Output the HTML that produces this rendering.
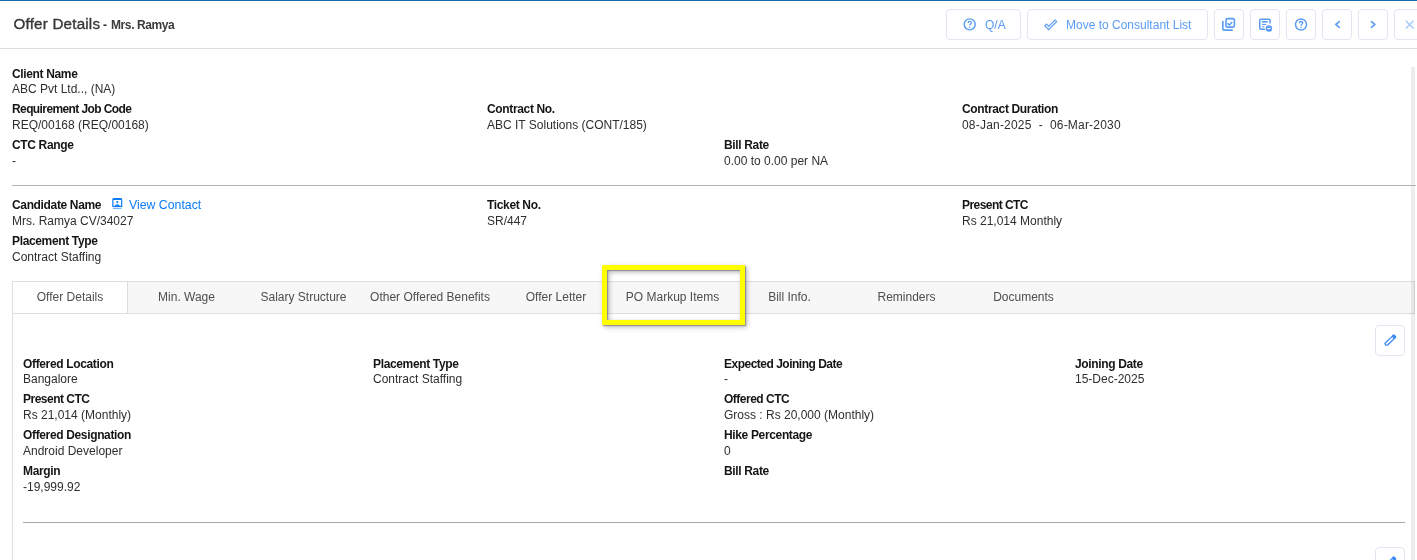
<!DOCTYPE html>
<html><head><meta charset="utf-8">
<style>
html,body{-webkit-font-smoothing:antialiased;margin:0;padding:0;width:1417px;height:560px;overflow:hidden;background:#fff;font-family:"Liberation Sans",sans-serif;}
.a{position:absolute;white-space:pre;line-height:12px;font-size:12px;}
.l{font-weight:700;color:#151515;letter-spacing:-0.35px;}
.v{color:#2e2e2e;}
.btn{position:absolute;box-sizing:border-box;border:1px solid #e1e6f0;border-radius:4px;background:#fff;}
.ib{width:30px;height:31px;top:9px;}
.ib svg{position:absolute;left:0;top:0;}
.tab{position:absolute;top:282px;height:31px;line-height:31px;font-size:12px;color:#4e4e4e;text-align:center;}
</style></head><body><div style="position:absolute;left:0;top:0;width:1417px;height:560px;will-change:transform;background:#fff">
<!-- top blue line -->
<div style="position:absolute;left:0;top:0;width:1417px;height:1px;background:#1b6aad"></div>
<!-- header -->
<div class="a" style="left:13.5px;top:15.8px;font-size:15.2px;line-height:15.5px;letter-spacing:0.2px;color:#363636;-webkit-text-stroke:0.35px #363636">Offer Details</div>
<div class="a" style="left:103px;top:19px;color:#333;font-weight:700">- </div>
<div class="a" style="left:111px;top:19px;color:#3a3a3a;font-weight:700;letter-spacing:-0.4px">Mrs. Ramya</div>
<div style="position:absolute;left:0;top:48px;width:1417px;height:1px;background:#dedede"></div>

<!-- header buttons -->
<div class="btn" style="left:946px;top:9px;width:75px;height:31px">
  <svg style="position:absolute;left:0;top:0" width="73" height="29" viewBox="0 0 73 29"><g transform="translate(8.7 -0.15)"><circle cx="14" cy="14.5" r="5.5" fill="none" stroke="#5a9cf5" stroke-width="1.45"/><path d="M12.4 13.2c0-1.1 .7-1.75 1.65-1.75s1.65.65 1.65 1.5c0 1.15-1.55 1.2-1.55 2.75" fill="none" stroke="#5a9cf5" stroke-width="1.35"/><rect x="13.05" y="16.85" width="1.9" height="1" rx="0.5" fill="#5a9cf5"/></g></svg>
  <div class="a" style="left:38px;top:9px;color:#5a9cf5">Q/A</div>
</div>
<div class="btn" style="left:1027px;top:9px;width:181px;height:31px">
  <svg style="position:absolute;left:16px;top:7.9px" width="13.5" height="13.5" viewBox="0 0 24 24"><path d="M19.77 5.03l1.4 1.4L8.43 19.17l-5.6-5.6 1.4-1.4 4.2 4.2L19.77 5.03m0-2.83L8.43 13.54l-4.2-4.2L0 13.57 8.43 22 24 6.43 19.77 2.2z" fill="#5a9cf5"/></svg>
  <div class="a" style="left:38px;top:9px;color:#5a9cf5">Move to Consultant List</div>
</div>
<div class="btn ib" style="left:1214px">
  <svg width="28" height="28" viewBox="0 0 28 28"><rect x="11" y="8.6" width="8.4" height="8.5" rx="1.3" fill="none" stroke="#5a9cf5" stroke-width="1.6"/><path d="M7.8 11 V19.1 a1 1 0 0 0 1 1 H17.7" fill="none" stroke="#5a9cf5" stroke-width="1.6"/><path d="M12.4 13.4 L14.5 15.0 L17.2 12.0" fill="none" stroke="#5a9cf5" stroke-width="1.5"/></svg>
</div>
<div class="btn ib" style="left:1250px">
  <svg width="28" height="28" viewBox="0 0 28 28"><path d="M13.9 19.35 H9.75 a1 1 0 0 1 -1 -1 V10.35 a1 1 0 0 1 1 -1 H18.05 a1 1 0 0 1 1 1 V13.4" fill="none" stroke="#5a9cf5" stroke-width="1.5"/><rect x="10.9" y="11" width="5.9" height="1.6" fill="#5a9cf5"/><rect x="10.9" y="13.9" width="4.3" height="1.1" fill="#5a9cf5"/><rect x="10.9" y="16.3" width="2.4" height="1.1" fill="#5a9cf5"/><circle cx="17.9" cy="18.5" r="3.3" fill="#5a9cf5"/><rect x="16.1" y="18.05" width="3.6" height="0.9" fill="#fff"/><rect x="17.5" y="16.7" width="0.8" height="3.6" fill="#fff" opacity="0.35"/></svg>
</div>
<div class="btn ib" style="left:1286px">
  <svg width="28" height="28" viewBox="0 0 28 28"><circle cx="14" cy="14.5" r="5.5" fill="none" stroke="#5a9cf5" stroke-width="1.45"/><path d="M12.4 13.2c0-1.1 .7-1.75 1.65-1.75s1.65.65 1.65 1.5c0 1.15-1.55 1.2-1.55 2.75" fill="none" stroke="#5a9cf5" stroke-width="1.35"/><rect x="13.05" y="16.85" width="1.9" height="1" rx="0.5" fill="#5a9cf5"/></svg>
</div>
<div class="btn ib" style="left:1322px">
  <svg width="28" height="28" viewBox="0 0 28 28"><path d="M16.3 11.6 L12.8 14.45 L16.3 17.3" fill="none" stroke="#5a9cf5" stroke-width="1.65" stroke-linejoin="round" stroke-linecap="round"/></svg>
</div>
<div class="btn ib" style="left:1358px">
  <svg width="28" height="28" viewBox="0 0 28 28"><path d="M12.4 11.6 L15.9 14.45 L12.4 17.3" fill="none" stroke="#5a9cf5" stroke-width="1.65" stroke-linejoin="round" stroke-linecap="round"/></svg>
</div>
<div class="btn ib" style="left:1394px">
  <svg width="28" height="28" viewBox="0 0 28 28"><path d="M10.7 10.7 L18.6 18.5 M18.6 10.7 L10.7 18.5" fill="none" stroke="#a3c6f8" stroke-width="1.3"/></svg>
</div>

<!-- section 1 -->
<div class="a l" style="left:12px;top:68px">Client Name</div>
<div class="a v" style="left:12px;top:83px">ABC Pvt Ltd.., (NA)</div>
<div class="a l" style="left:12px;top:103px;letter-spacing:-0.6px">Requirement Job Code</div>
<div class="a v" style="left:12px;top:119px">REQ/00168 (REQ/00168)</div>
<div class="a l" style="left:487px;top:103px">Contract No.</div>
<div class="a v" style="left:487px;top:119px">ABC IT Solutions (CONT/185)</div>
<div class="a l" style="left:962px;top:103px">Contract Duration</div>
<div class="a v" style="left:962px;top:119px;letter-spacing:0.2px">08-Jan-2025  -  06-Mar-2030</div>
<div class="a l" style="left:12px;top:139px">CTC Range</div>
<div class="a v" style="left:12px;top:155px">-</div>
<div class="a l" style="left:724px;top:139px">Bill Rate</div>
<div class="a v" style="left:724px;top:155px">0.00 to 0.00 per NA</div>
<div style="position:absolute;left:12px;top:185px;width:1404px;height:1px;background:#b4b4b4"></div>

<!-- section 2 -->
<div class="a l" style="left:12px;top:199px">Candidate Name</div>
<svg style="position:absolute;left:112px;top:198px" width="11" height="11" viewBox="0 0 11 11"><path d="M0.85 8.3 V1.8 a1 1 0 0 1 1 -1 H8.65 a1 1 0 0 1 1 1 V8.3 Z" fill="none" stroke="#0f7bf5" stroke-width="1.2"/><rect x="0.8" y="0" width="8.9" height="1.9" rx="0.8" fill="#0f7bf5"/><circle cx="5.3" cy="4.1" r="1.15" fill="#0f7bf5"/><path d="M3 8 Q3.3 6.3 5.3 6.3 Q7.3 6.3 7.6 8 Z" fill="#0f7bf5"/><rect x="1" y="9.8" width="8.4" height="0.9" fill="#0f7bf5" opacity="0.8"/></svg>
<div class="a" style="left:129px;top:199px;color:#0f7bf5;font-size:12.3px">View Contact</div>
<div class="a v" style="left:12px;top:215px">Mrs. Ramya CV/34027</div>
<div class="a l" style="left:487px;top:199px">Ticket No.</div>
<div class="a v" style="left:487px;top:215px">SR/447</div>
<div class="a l" style="left:962px;top:199px;letter-spacing:-0.55px">Present CTC</div>
<div class="a v" style="left:962px;top:215px">Rs 21,014 Monthly</div>
<div class="a l" style="left:12px;top:235px">Placement Type</div>
<div class="a v" style="left:12px;top:251px">Contract Staffing</div>

<!-- tabs -->
<div style="position:absolute;left:12px;top:281px;width:1401px;height:31px;border:1px solid #dedede;background:#f7f7f7;box-sizing:content-box"></div>
<div style="position:absolute;left:12px;top:281px;width:1px;height:279px;background:#dedede"></div>
<div style="position:absolute;left:13px;top:282px;width:114px;height:31px;background:#fff;border-right:1px solid #dedede"></div>
<div class="tab" style="left:13px;width:114px">Offer Details</div>
<div class="tab" style="left:128px;width:117px">Min. Wage</div>
<div class="tab" style="left:245px;width:117px">Salary Structure</div>
<div class="tab" style="left:362px;width:136px">Other Offered Benefits</div>
<div class="tab" style="left:498px;width:116px">Offer Letter</div>
<div class="tab" style="left:614px;width:117px">PO Markup Items</div>
<div class="tab" style="left:731px;width:117px">Bill Info.</div>
<div class="tab" style="left:848px;width:117px">Reminders</div>
<div class="tab" style="left:965px;width:117px">Documents</div>

<!-- yellow highlight -->
<div style="position:absolute;left:602px;top:265px;width:133px;height:50px;border:5px solid #ffff00;box-shadow:1px 1px 1px rgba(40,40,70,0.35), 2px 2px 5px rgba(0,0,0,0.28), inset 1px 1px 1px rgba(40,40,70,0.35), inset 2px 2px 5px rgba(0,0,0,0.3)"></div>

<!-- panel -->
<div class="btn" style="left:1375px;top:325px;width:30px;height:31px">
  <svg style="position:absolute;left:0;top:0" width="28" height="29" viewBox="0 0 28 29"><g transform="translate(14.3 14.3) rotate(-44)"><path d="M-6.6 0.2 L-6.2 -1.5 H5.2 V1.5 H-5.2 Z" fill="none" stroke="#3f8bf6" stroke-width="1.3" stroke-linejoin="round"/><rect x="3.6" y="-2.2" width="3.4" height="4.4" rx="1.3" fill="#3f8bf6"/></g></svg>
</div>
<div class="a l" style="left:23px;top:358px">Offered Location</div>
<div class="a v" style="left:23px;top:373px">Bangalore</div>
<div class="a l" style="left:23px;top:393px;letter-spacing:-0.5px">Present CTC</div>
<div class="a v" style="left:23px;top:409px">Rs 21,014 (Monthly)</div>
<div class="a l" style="left:23px;top:429px">Offered Designation</div>
<div class="a v" style="left:23px;top:445px">Android Developer</div>
<div class="a l" style="left:23px;top:465px">Margin</div>
<div class="a v" style="left:23px;top:481px">-19,999.92</div>

<div class="a l" style="left:373px;top:358px">Placement Type</div>
<div class="a v" style="left:373px;top:373px">Contract Staffing</div>

<div class="a l" style="left:724px;top:358px;letter-spacing:-0.5px">Expected Joining Date</div>
<div class="a v" style="left:724px;top:373px">-</div>
<div class="a l" style="left:724px;top:393px;letter-spacing:-0.5px">Offered CTC</div>
<div class="a v" style="left:724px;top:409px">Gross : Rs 20,000 (Monthly)</div>
<div class="a l" style="left:724px;top:429px">Hike Percentage</div>
<div class="a v" style="left:724px;top:445px">0</div>
<div class="a l" style="left:724px;top:465px">Bill Rate</div>

<div class="a l" style="left:1075px;top:358px">Joining Date</div>
<div class="a v" style="left:1075px;top:373px">15-Dec-2025</div>

<div style="position:absolute;left:23px;top:522px;width:1382px;height:1px;background:#a8a8a8"></div>
<div class="btn" style="left:1375px;top:547px;width:30px;height:31px">
  <svg style="position:absolute;left:0;top:0" width="28" height="29" viewBox="0 0 28 29"><g transform="translate(14.3 14.3) rotate(-44)"><path d="M-6.6 0.2 L-6.2 -1.5 H5.2 V1.5 H-5.2 Z" fill="none" stroke="#3f8bf6" stroke-width="1.3" stroke-linejoin="round"/><rect x="3.6" y="-2.2" width="3.4" height="4.4" rx="1.3" fill="#3f8bf6"/></g></svg>
</div>

<!-- scrollbar strip -->
<div style="position:absolute;left:1411px;top:67px;width:4px;height:493px;background:rgba(0,0,0,0.07)"></div>
<div style="position:absolute;left:1411px;top:185px;width:5px;height:1px;background:#b4b4b4"></div>
</div></body></html>
